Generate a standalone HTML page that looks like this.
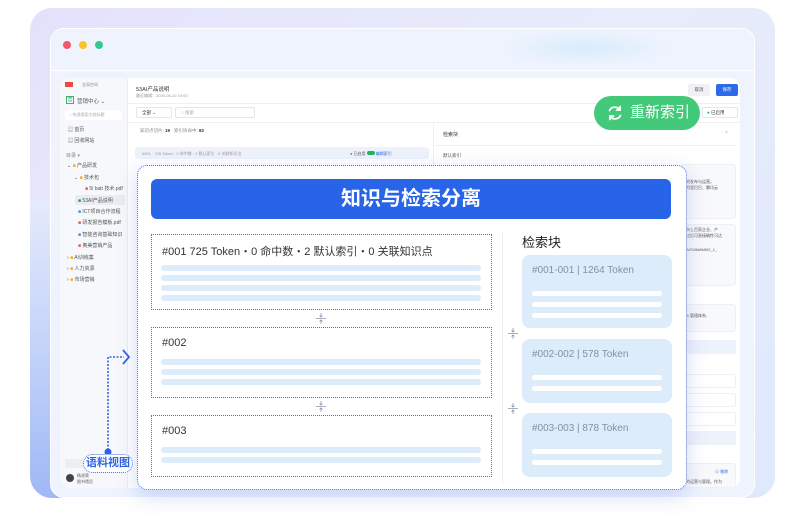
<!DOCTYPE html>
<html><head><meta charset="utf-8"><style>
*{box-sizing:border-box;margin:0;padding:0}
body{width:805px;height:520px;background:#fff;position:relative;overflow:hidden;font-family:"Liberation Sans","Noto Sans CJK SC",sans-serif;color:#333}
.a{position:absolute}
.t{font-size:5px;color:#555;white-space:nowrap}
.dot{border:1.3px dotted #3f6fe6}
.ln{position:absolute;height:6px;border-radius:3px;background:#dcecfb}
.wl{position:absolute;height:5px;border-radius:3px;background:#fff}
.rc{position:absolute;background:#dcecfb;border-radius:8px}
.rc span{position:absolute;left:10px;top:10px;font-size:10px;color:#8290a8}
</style></head><body>
<div class="a" style="left:30px;top:8px;width:745px;height:490px;border-radius:22px;background:linear-gradient(135deg,#e4e2fb 0%,#e8ecfb 50%,#dfe9fc 100%)"></div>
<div class="a" style="left:30px;top:200px;width:40px;height:298px;border-radius:0 0 0 22px;background:linear-gradient(180deg,#e6ebfc,#9fb9f6)"></div>
<div class="a" style="left:50px;top:28px;width:705px;height:470px;border-radius:14px;background:#eef3fe;border:1px solid #fff"></div>
<div class="a" style="left:500px;top:30px;width:170px;height:36px;background:radial-gradient(ellipse at center,#d8ecfb 0%,rgba(238,243,254,0) 70%)"></div>
<div class="a" style="left:50px;top:70px;width:705px;height:1px;background:#fff"></div>
<div class="a" style="left:63px;top:41px;width:8px;height:8px;border-radius:50%;background:#f25a6a"></div>
<div class="a" style="left:79px;top:41px;width:8px;height:8px;border-radius:50%;background:#f8c32c"></div>
<div class="a" style="left:95px;top:41px;width:8px;height:8px;border-radius:50%;background:#36c98e"></div>
<!-- app -->
<div class="a" style="left:60px;top:78px;width:680px;height:410px;border-radius:10px;background:#fff;overflow:hidden">
 <div class="a" style="left:0;top:0;width:68px;height:410px;background:#f7f8fb;border-right:1px solid #eceef2"></div>
 <div class="a" style="left:5px;top:4px;width:8px;height:5px;background:#e84c3d"></div>
 <div class="a t" style="left:22px;top:4px;color:#888;font-size:4px">全局空间</div>
 <div class="a" style="left:6px;top:18px;width:8px;height:8px;border:1px solid #3bb56b;font-size:5px;color:#3bb56b;line-height:7px;text-align:center">营</div>
 <div class="a t" style="left:17px;top:19px;font-size:5.5px">营销中心 ⌄</div>
 <div class="a" style="left:5px;top:32px;width:57px;height:10px;background:#fff;border-radius:3px"></div>
 <div class="a t" style="left:9px;top:34px;color:#aaa;font-size:4px">○ 快速搜索文档标题</div>
 <div class="a t" style="left:8px;top:48px">▤ 首页</div>
 <div class="a t" style="left:8px;top:59px">▤ 回收网站</div>
 <div class="a t" style="left:6px;top:74px;color:#888">目录 ▾</div>
 <div class="a t" style="left:7px;top:84px">⌄ <span style="color:#f5a623">■</span> 产品研发</div>
 <div class="a t" style="left:14px;top:96px">⌄ <span style="color:#f5a623">■</span> 技术包</div>
 <div class="a t" style="left:25px;top:107px"><span style="color:#e8553f">■</span> 5l bab 技术.pdf</div>
 <div class="a" style="left:15px;top:117px;width:50px;height:10px;background:#e9ecf1;border-radius:2px"></div>
 <div class="a t" style="left:18px;top:119px"><span style="color:#1a9a7a">■</span> 53AI产品说明</div>
 <div class="a t" style="left:18px;top:130px"><span style="color:#3a8ef0">■</span> ICT项目合作流程</div>
 <div class="a t" style="left:18px;top:141px"><span style="color:#e8553f">■</span> 研发报告模板.pdf</div>
 <div class="a t" style="left:18px;top:153px"><span style="color:#3a8ef0">■</span> 智能咨询基础知识</div>
 <div class="a t" style="left:18px;top:164px"><span style="color:#e8553f">■</span> 奥美营销产品</div>
 <div class="a t" style="left:7px;top:176px">› <span style="color:#f5a623">■</span> AI训练集</div>
 <div class="a t" style="left:7px;top:187px">› <span style="color:#f5a623">■</span> 人力资源</div>
 <div class="a t" style="left:7px;top:198px">› <span style="color:#f5a623">■</span> 市场营销</div>
 <div class="a" style="left:5px;top:381px;width:20px;height:9px;background:#eceef2;border-radius:2px"></div>
 <div class="a" style="left:6px;top:396px;width:8px;height:8px;border-radius:50%;background:#444"></div>
 <div class="a t" style="left:17px;top:395px;font-size:4px">杨贤荣<br>图书馆员</div>
 <div class="a t" style="left:76px;top:7px;font-size:5.5px;color:#333">53AI产品说明</div>
 <div class="a t" style="left:76px;top:15px;font-size:4px;color:#999">最近编辑：2025-08-10 19:00</div>
 <div class="a" style="left:68px;top:25px;width:612px;height:1px;background:#eef0f4"></div>
 <div class="a" style="left:628px;top:6px;width:22px;height:12px;background:#f0f1f4;border-radius:2px;font-size:4.5px;text-align:center;line-height:12px;color:#555">取消</div>
 <div class="a" style="left:656px;top:6px;width:22px;height:12px;background:#2d6ae8;border-radius:2px;font-size:4.5px;text-align:center;line-height:12px;color:#fff">保存</div>
 <div class="a" style="left:76px;top:29px;width:36px;height:11px;border:1px solid #e4e6ea;border-radius:2px;font-size:4.5px;line-height:9px;padding-left:5px">全部 ⌄</div>
 <div class="a" style="left:115px;top:29px;width:80px;height:11px;border:1px solid #e4e6ea;border-radius:2px;font-size:4.5px;line-height:9px;padding-left:5px;color:#aaa">○ 搜索</div>
 <div class="a" style="left:642px;top:29px;width:36px;height:11px;border:1px solid #e4e6ea;border-radius:2px;font-size:4.5px;line-height:9px;padding-left:4px"><span style="color:#22b35e">●</span> 已启用</div>
 <div class="a" style="left:68px;top:44px;width:612px;height:1px;background:#eef0f4"></div>
 <div class="a t" style="left:80px;top:50px;color:#888;font-size:4.5px">知识点切片: <b style="color:#333">19</b> · 索引块命中: <b style="color:#333">82</b></div>
 <div class="a" style="left:373px;top:44px;width:1px;height:366px;background:#eef0f4"></div>
 <div class="a t" style="left:383px;top:53px;font-size:5px;color:#333">检索块</div>
 <div class="a t" style="left:665px;top:52px;color:#aaa">×</div>
 <div class="a" style="left:376px;top:67px;width:300px;height:1px;background:#eef0f4"></div>
 <div class="a t" style="left:383px;top:75px;font-size:4.5px">默认索引</div>
 <div class="a" style="left:75px;top:69px;width:294px;height:12px;background:#eef2fb;border-radius:3px"></div>
 <div class="a t" style="left:82px;top:73px;color:#999;font-size:4px">#001 · 725 Token · 0 命中数 · 2 默认索引 · 0 关联知识点</div>
 <div class="a t" style="left:290px;top:73px;font-size:4px"><span style="color:#22b35e">●</span> 已启用 <span style="display:inline-block;width:8px;height:4px;background:#22b35e;border-radius:2px"></span> <span style="color:#2d6ae8">编辑索引</span></div>
 <div class="a" style="left:620px;top:86px;width:56px;height:55px;background:#f8f9fb;border:1px solid #eef0f4;border-radius:3px"></div>
 <div class="a t" style="left:626px;top:101px;font-size:4px">的发布与运营。<br>阿里巴巴、腾讯云</div>
 <div class="a" style="left:620px;top:146px;width:56px;height:62px;background:#f8f9fb;border:1px solid #eef0f4;border-radius:3px"></div>
 <div class="a t" style="left:626px;top:149px;font-size:4px">市上百家企业、产<br>过后可直接确性可达</div>
 <div class="a t" style="left:626px;top:169px;font-size:4px">2d7d3d8b902_1_</div>
 <div class="a" style="left:620px;top:226px;width:56px;height:28px;background:#f8f9fb;border:1px solid #eef0f4;border-radius:3px"></div>
 <div class="a t" style="left:626px;top:235px;font-size:4px">入管理体系;</div>
 <div class="a" style="left:620px;top:262px;width:56px;height:14px;background:#eef2fb"></div>
 <div class="a" style="left:620px;top:296px;width:56px;height:14px;border:1px solid #eef0f4;border-radius:2px"></div>
 <div class="a" style="left:620px;top:315px;width:56px;height:14px;border:1px solid #eef0f4;border-radius:2px"></div>
 <div class="a" style="left:620px;top:334px;width:56px;height:14px;border:1px solid #eef0f4;border-radius:2px"></div>
 <div class="a" style="left:620px;top:353px;width:56px;height:14px;background:#eef2fb"></div>
 <div class="a" style="left:620px;top:385px;width:56px;height:25px;background:#f8f9fb;border:1px solid #eef0f4;border-radius:3px"></div>
 <div class="a t" style="left:655px;top:391px;font-size:4px;color:#2d6ae8">⊙ 移除</div>
 <div class="a t" style="left:626px;top:401px;font-size:4px">的运营与管理。作为</div>
</div>
<!-- overlay card -->
<div class="a" style="left:128px;top:160px;width:570px;height:340px;background:radial-gradient(ellipse at center,rgba(150,175,240,.35),rgba(255,255,255,0) 70%)"></div>
<div class="a dot" style="left:137px;top:165px;width:550px;height:325px;background:#fff;border-radius:10px;box-shadow:0 6px 20px rgba(80,110,220,.25)"></div>
<div class="a" style="left:151px;top:179px;width:520px;height:40px;background:#2764e8;border-radius:6px;color:#fff;font-size:20px;font-weight:bold;text-align:center;line-height:40px">知识与检索分离</div>
<div class="a dot" style="left:151px;top:234px;width:341px;height:76px"></div>
<div class="a" style="left:162px;top:243px;font-size:11px;color:#333;white-space:nowrap">#001 725 Token・0 命中数・2 默认索引・0 关联知识点</div>
<div class="ln" style="left:161px;top:265px;width:320px"></div>
<div class="ln" style="left:161px;top:275px;width:320px"></div>
<div class="ln" style="left:161px;top:285px;width:320px"></div>
<div class="ln" style="left:161px;top:295px;width:320px"></div>
<svg class="a" style="left:315px;top:312px" width="12" height="13" viewBox="0 0 12 13" fill="none" stroke="#8a94a8" stroke-width="0.8"><path d="M6 1V5M4.5 3.5L6 5L7.5 3.5M1 6.5H11M6 12V8M4.5 9.5L6 8L7.5 9.5"/></svg>
<div class="a dot" style="left:151px;top:327px;width:341px;height:71px"></div>
<div class="a" style="left:162px;top:337px;font-size:11px;color:#333">#002</div>
<div class="ln" style="left:161px;top:359px;width:320px"></div>
<div class="ln" style="left:161px;top:369px;width:320px"></div>
<div class="ln" style="left:161px;top:379px;width:320px"></div>
<svg class="a" style="left:315px;top:400px" width="12" height="13" viewBox="0 0 12 13" fill="none" stroke="#8a94a8" stroke-width="0.8"><path d="M6 1V5M4.5 3.5L6 5L7.5 3.5M1 6.5H11M6 12V8M4.5 9.5L6 8L7.5 9.5"/></svg>
<div class="a dot" style="left:151px;top:415px;width:341px;height:62px"></div>
<div class="a" style="left:162px;top:425px;font-size:11px;color:#333">#003</div>
<div class="ln" style="left:161px;top:447px;width:320px"></div>
<div class="ln" style="left:161px;top:457px;width:320px"></div>
<div class="a" style="left:502px;top:233px;width:1px;height:250px;background:#eceef2"></div>
<div class="a" style="left:522px;top:232px;font-size:13px;color:#222">检索块</div>
<div class="rc" style="left:522px;top:255px;width:150px;height:73px"><span>#001-001 | 1264 Token</span></div>
<div class="wl" style="left:532px;top:291px;width:130px"></div>
<div class="wl" style="left:532px;top:302px;width:130px"></div>
<div class="wl" style="left:532px;top:313px;width:130px"></div>
<div class="rc" style="left:522px;top:339px;width:150px;height:64px"><span>#002-002 | 578 Token</span></div>
<div class="wl" style="left:532px;top:375px;width:130px"></div>
<div class="wl" style="left:532px;top:386px;width:130px"></div>
<div class="rc" style="left:522px;top:413px;width:150px;height:64px"><span>#003-003 | 878 Token</span></div>
<div class="wl" style="left:532px;top:449px;width:130px"></div>
<div class="wl" style="left:532px;top:460px;width:130px"></div>
<svg class="a" style="left:507px;top:327px" width="12" height="13" viewBox="0 0 12 13" fill="none" stroke="#8a94a8" stroke-width="0.8"><path d="M6 1V5M4.5 3.5L6 5L7.5 3.5M1 6.5H11M6 12V8M4.5 9.5L6 8L7.5 9.5"/></svg>
<svg class="a" style="left:507px;top:402px" width="12" height="13" viewBox="0 0 12 13" fill="none" stroke="#8a94a8" stroke-width="0.8"><path d="M6 1V5M4.5 3.5L6 5L7.5 3.5M1 6.5H11M6 12V8M4.5 9.5L6 8L7.5 9.5"/></svg>
<!-- green button -->
<div class="a" style="left:594px;top:96px;width:106px;height:34px;background:#43c97a;border-radius:17px;color:#fff;font-size:15px;line-height:34px;padding-left:36px;white-space:nowrap">重新索引</div>
<svg class="a" style="left:606px;top:104px" width="18" height="18" viewBox="0 0 18 18" fill="none" stroke="#fff" stroke-width="1.8" stroke-linecap="round"><path d="M14 6A6 6 0 0 0 3.5 6.5M4 12A6 6 0 0 0 14.5 11.5"/><path d="M14 2.5V6H10.5M4 15.5V12H7.5"/></svg>
<!-- connector -->
<svg class="a" style="left:100px;top:345px" width="40" height="115" viewBox="0 0 40 115" fill="none"><path d="M8 112V12H24" stroke="#2d63e6" stroke-width="1.6" stroke-dasharray="2 1.5"/><path d="M23 5L29 12L23 19" stroke="#2d63e6" stroke-width="1.8"/><circle cx="8" cy="107" r="3.5" fill="#2d63e6"/></svg>
<div class="a dot" style="left:83px;top:454px;width:50px;height:19px;border-radius:10px;background:#fff;color:#2d63e6;font-size:11px;font-weight:bold;text-align:center;line-height:17px">语料视图</div>
</body></html>
